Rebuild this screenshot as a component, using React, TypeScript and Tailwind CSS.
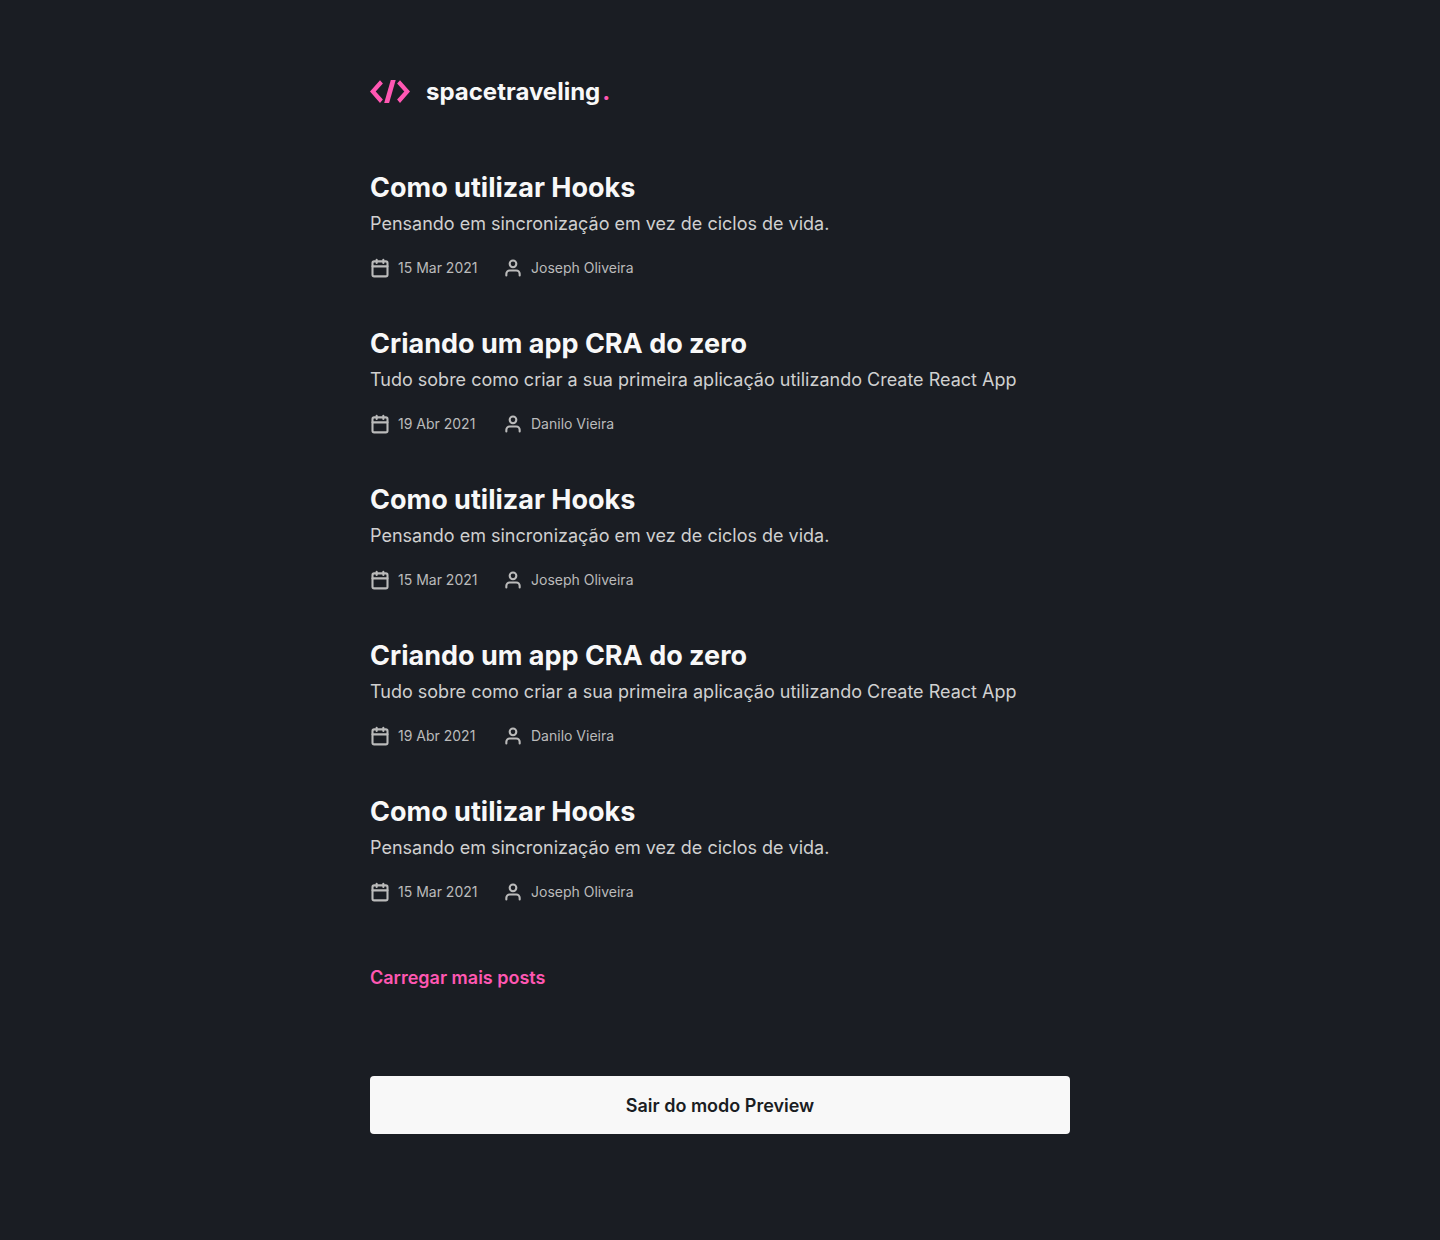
import React from "react";
import { FiCalendar, FiUser } from "react-icons/fi";

type Post = { title: string; subtitle: string; date: string; author: string };

const hooks: Post = {
  title: "Como utilizar Hooks",
  subtitle: "Pensando em sincronização em vez de ciclos de vida.",
  date: "15 Mar 2021",
  author: "Joseph Oliveira",
};

const cra: Post = {
  title: "Criando um app CRA do zero",
  subtitle: "Tudo sobre como criar a sua primeira aplicação utilizando Create React App",
  date: "19 Abr 2021",
  author: "Danilo Vieira",
};

const posts: Post[] = [hooks, cra, hooks, cra, hooks];

function Logo() {
  return (
    <a href="#" className="flex items-center gap-4 text-2xl leading-8 font-bold text-[#f8f8f8]">
      <svg width="40" height="24" viewBox="0 0 40 24" fill="#ff57b2" aria-hidden="true">
        <path d="M10 0.300 12.900 3.600 5.700 11.600 12.900 19.600 10 22.900 0 11.600Z" />
        <path d="M30 0.300 27.100 3.600 34.300 11.600 27.100 19.600 30 22.900 40 11.600Z" />
        <path d="M20.800 0H25.700L19.100 23H14.200Z" />
      </svg>
      <span>
        spacetraveling<span className="ml-0.5 text-[#ff57b2]">.</span>
      </span>
    </a>
  );
}

function PostItem({ post }: { post: Post }) {
  return (
    <article>
      <a href="#" className="block">
        <h2 className="text-[27px] leading-10 font-bold text-[#f8f8f8]">{post.title}</h2>
        <p className="mt-0.5 text-lg leading-7 text-[#d0d0d0]">{post.subtitle}</p>
        <div className="mt-5 flex items-center text-sm leading-5 text-[#bbbbbb]">
          <time className="flex w-[133px] items-center gap-2">
            <FiCalendar size={20} strokeWidth={2.5} />
            {post.date}
          </time>
          <span className="flex items-center gap-2">
            <FiUser size={20} strokeWidth={2.5} />
            {post.author}
          </span>
        </div>
      </a>
    </article>
  );
}

export default function App() {
  return (
    <div className="min-h-screen bg-[#1a1d23] px-5 pt-[76px] pb-20 font-['Inter',sans-serif]">
      <div className="mx-auto max-w-[700px]">
        <header className="flex">
          <Logo />
        </header>
        <main className="mt-[60px]">
          <div className="flex flex-col gap-[46px]">
            {posts.map((post, i) => (
              <PostItem key={i} post={post} />
            ))}
          </div>
          <button type="button" className="mt-[62px] block text-lg leading-7 font-semibold text-[#ff57b2]">
            Carregar mais posts
          </button>
          <button
            type="button"
            className="mt-[84px] block w-full rounded bg-[#f8f8f8] pt-4 pb-3.5 text-lg leading-7 font-semibold text-[#1a1d23]"
          >
            Sair do modo Preview
          </button>
        </main>
      </div>
    </div>
  );
}
